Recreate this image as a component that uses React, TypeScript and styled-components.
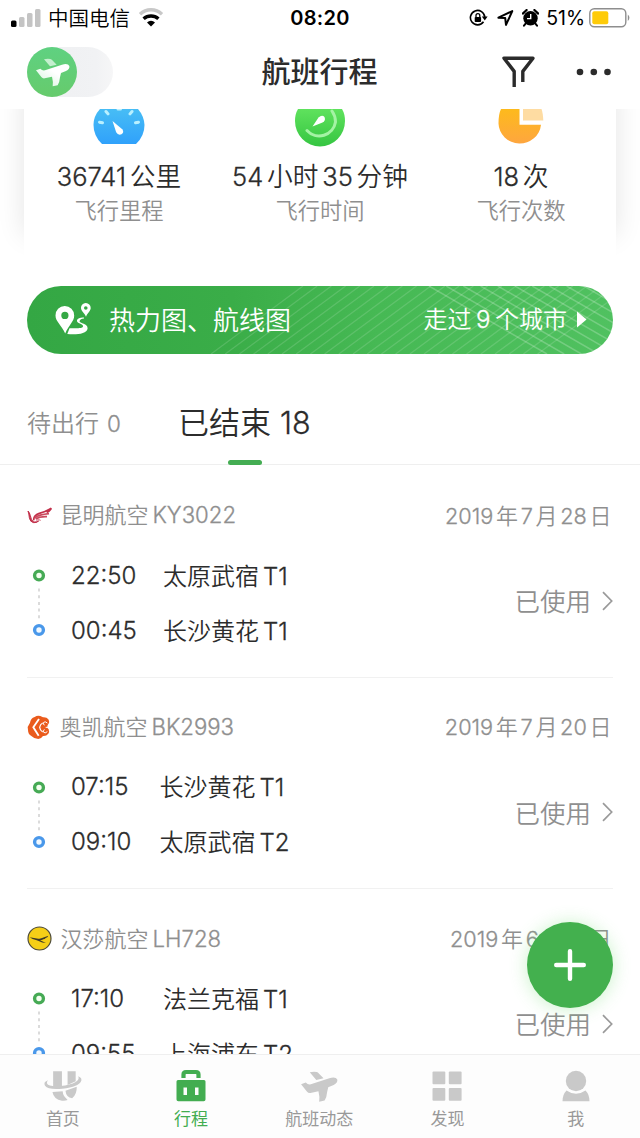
import React from 'react';
import styled, { createGlobalStyle } from 'styled-components';

const GlobalStyle = createGlobalStyle`
  * { box-sizing: border-box; }
  body { margin: 0; background: #fff; }
  svg { display: block; flex: none; }
`;

const Screen = styled.div`
  width: 640px;
  height: 1138px;
  display: flex;
  flex-direction: column;
  overflow: hidden;
  position: relative;
  background: #fff;
  color: #2c2c2c;
  font-family: Inter, 'Noto Sans CJK SC', sans-serif;
  font-weight: 300;
`;

/* ---------- text with separately spaced latin runs ---------- */

const TextLine = styled.span<{ $size: number; $color?: string; $weight?: number; $ls?: number }>`
  display: flex;
  align-items: baseline;
  white-space: nowrap;
  line-height: 1.3;
  padding-bottom: 0.06em;
  font-family: 'Noto Sans CJK SC', sans-serif;
  font-size: ${p => p.$size}px;
  font-weight: ${p => p.$weight ?? 350};
  letter-spacing: ${p => p.$ls ?? 0}px;
  color: ${p => p.$color ?? 'inherit'};
`;

const Latin = styled.span<{ $size?: number; $gap: number; $ls: number; $first: boolean; $last: boolean }>`
  font-family: Inter, sans-serif;
  font-weight: 300;
  -webkit-text-stroke: 0.3px currentColor;
  font-size: ${p => (p.$size ? `${p.$size}px` : 'inherit')};
  letter-spacing: ${p => p.$ls}px;
  margin-left: ${p => (p.$first ? 0 : p.$gap)}px;
  margin-right: ${p => (p.$last ? 0 : p.$gap)}px;
`;

interface MixedProps {
  text: string;
  size: number;
  latinSize?: number;
  gap?: number;
  ls?: number;
  latinLs?: number;
  color?: string;
  weight?: number;
}

function Mixed({ text, size, latinSize, gap = 4, ls = 0, latinLs = 0, color, weight }: MixedProps) {
  const runs = text.match(/[\x21-\x7e]+|[^\x00-\x7f]+/g) ?? [];
  return (
    <TextLine $size={size} $color={color} $weight={weight} $ls={ls}>
      {runs.map((run, i) =>
        run.charCodeAt(0) < 128 ? (
          <Latin key={i} $size={latinSize} $gap={gap} $ls={latinLs} $first={i === 0} $last={i === runs.length - 1}>
            {run}
          </Latin>
        ) : (
          <span key={i}>{run}</span>
        ),
      )}
    </TextLine>
  );
}

/* ---------- status bar ---------- */

const StatusBar = styled.div`
  height: 36px;
  flex: none;
  display: grid;
  grid-template-columns: 1fr auto 1fr;
  align-items: center;
  padding: 0 9px 0 11px;
  color: #000;
`;

const StatusSide = styled.div<{ $end?: boolean }>`
  display: flex;
  align-items: center;
  justify-content: ${p => (p.$end ? 'flex-end' : 'flex-start')};
`;

const Clock = styled.div`
  font-size: 20px;
  font-weight: 600;
  letter-spacing: 0.3px;
  margin-right: 2px;
`;

const Percent = styled.div`
  font-size: 19.5px;
  font-weight: 400;
  letter-spacing: -0.1px;
  margin: 0 4px 0 7px;
`;

const Carrier = styled.div`
  margin: 0 8px 0 7px;
`;

const Spacer = styled.div<{ $w: number }>`
  flex: none;
  width: ${p => p.$w}px;
`;

const SignalIcon = () => (
  <svg width="30" height="20" viewBox="0 0 30 20">
    <rect x="0" y="12.5" width="5.5" height="6.5" rx="1.5" fill="#000" />
    <rect x="8" y="9" width="5.5" height="10" rx="1.5" fill="#c4c4c4" />
    <rect x="16" y="5" width="5.5" height="14" rx="1.5" fill="#c4c4c4" />
    <rect x="24" y="1" width="5.5" height="18" rx="1.5" fill="#c4c4c4" />
  </svg>
);

const WifiIcon = () => (
  <svg width="26" height="20" viewBox="0 0 26 20">
    <path d="M2 6.200a16 16 0 0 1 22 0" fill="none" stroke="#c8c8c8" strokeWidth="3.400" />
    <path d="M5.6 10.800a11 11 0 0 1 14.8 0" fill="none" stroke="#000" strokeWidth="3.400" />
    <path d="M13 18.400 9 14.400a5.900 5.900 0 0 1 8 0z" fill="#000" />
  </svg>
);

const LockRotateIcon = () => (
  <svg width="19" height="18" viewBox="0 0 19 18">
    <path d="M14.5 12.8a7.2 7.2 0 1 1 1.3-4.6" fill="none" stroke="#000" strokeWidth="1.6" />
    <path d="M12.8 7.6h5.8l-2.8 3.8z" fill="#000" />
    <rect x="5.7" y="8" width="6.4" height="5" rx="0.8" fill="#000" />
    <path d="M7 8V6.6a1.9 1.9 0 0 1 3.8 0V8" fill="none" stroke="#000" strokeWidth="1.3" />
  </svg>
);

const LocationIcon = () => (
  <svg width="17" height="17" viewBox="0 0 17 17">
    <path d="M1.400 7.700 15.3 1.100 9 14.900 8.2 8.100z" fill="none" stroke="#000" strokeWidth="2" strokeLinejoin="round" />
  </svg>
);

const AlarmIcon = () => (
  <svg width="17" height="18" viewBox="0 0 17 18">
    <circle cx="8.5" cy="9.3" r="7.2" fill="#000" />
    <path d="M0.8 4.6 4.6 1M16.2 4.6 12.4 1" stroke="#000" strokeWidth="2.2" strokeLinecap="round" />
    <path d="M3.6 14.6 2 16.6M13.4 14.6l1.6 2" stroke="#000" strokeWidth="2" strokeLinecap="round" />
    <path d="M8.7 5v4.6H5" fill="none" stroke="#fff" strokeWidth="1.4" />
  </svg>
);

const BatteryIcon = () => (
  <svg width="42" height="20" viewBox="0 0 42 20">
    <rect x="0.8" y="0.8" width="36" height="18" rx="4.5" fill="#fff" stroke="#8e8e8e" strokeWidth="1.4" />
    <rect x="3.3" y="3.3" width="16" height="13" rx="2" fill="#fecb09" />
    <path d="M38.8 6.6a4 4 0 0 1 0 6.4z" fill="#8e8e8e" />
  </svg>
);

/* ---------- header ---------- */

const Header = styled.div`
  height: 73px;
  flex: none;
  display: grid;
  grid-template-columns: 1fr auto 1fr;
  align-items: center;
  padding: 0 28px 1px 27px;
`;

const Toggle = styled.div`
  width: 86px;
  height: 50px;
  border-radius: 25px;
  background: linear-gradient(90deg, #f0f1f3 50%, #f1f2f4 80%, #f6f6f7);
`;

const HeaderActions = styled.div`
  display: flex;
  justify-content: flex-end;
  align-items: center;
  gap: 41px;
`;

const PLANE_WING = 'M132 178q10-3 19-1 4 1 6 4l13 13-20 5z';
const PLANE_BODY =
  'M108 211l13-5q6 7 14 5l51-17q18-5 22 4 2 9-10 15l-15 6-3 13q-1 14-7 24l-15 3q2-14-2-29l-22 5q-6 1-10-4z';

const ToggleKnob = () => (
  <svg width="50" height="50" viewBox="81 141 150 150">
    <defs>
      <linearGradient id="knob" x1="0" y1="0" x2="0" y2="1">
        <stop offset="0" stopColor="#5fd181" />
        <stop offset="1" stopColor="#66cb6c" />
      </linearGradient>
      <linearGradient id="knobPlane" x1="0" y1="1" x2="1" y2="0">
        <stop offset="0" stopColor="#d3f3da" />
        <stop offset="0.6" stopColor="#fff" />
      </linearGradient>
    </defs>
    <circle cx="156" cy="216" r="75" fill="url(#knob)" />
    <path d={PLANE_WING} fill="#c5efcf" />
    <path d={PLANE_BODY} fill="url(#knobPlane)" />
  </svg>
);

const FilterIcon = () => (
  <svg width="33" height="32" viewBox="0 0 33 32">
    <path d="M12.2 31V15.4L2 2.2h29L20.8 15.4V26" fill="none" stroke="#2b2b2b" strokeWidth="3.4" strokeLinejoin="round" />
  </svg>
);

const DotsIcon = () => (
  <svg width="36" height="8" viewBox="0 0 36 8">
    <circle cx="4" cy="4" r="3.3" fill="#2b2b2b" />
    <circle cx="17.8" cy="4" r="3.3" fill="#2b2b2b" />
    <circle cx="31.5" cy="4" r="3.3" fill="#2b2b2b" />
  </svg>
);

/* ---------- statistics ---------- */

const Content = styled.div`
  flex: 1;
  min-height: 0;
  overflow: hidden;
`;

const StatsClip = styled.div`
  height: 176.5px;
  overflow: hidden;
  padding: 0 24px;
`;

const StatsCard = styled.div`
  height: 150px;
  display: grid;
  grid-template-columns: 190px 1fr 190px;
  background: #fff;
  box-shadow: 0 -24px 26px rgba(0, 0, 0, 0.11);
`;

const Stat = styled.div`
  display: flex;
  flex-direction: column;
  align-items: center;
`;

const StatIcon = styled.div`
  height: 49px;
`;

const StatValue = styled.div`
  height: 36px;
  display: flex;
  align-items: center;
`;

const StatLabel = styled.div`
  height: 32px;
  display: flex;
  align-items: center;
`;

const GaugeIcon = () => (
  <svg width="52" height="38" viewBox="0 0 52 38">
    <defs>
      <linearGradient id="gauge" x1="0" y1="0" x2="0" y2="1">
        <stop offset="0" stopColor="#47bdf5" />
        <stop offset="1" stopColor="#30a1fb" />
      </linearGradient>
    </defs>
    <path d="M7 0h38q6 7 6.500 16 0 11-8.500 19H9Q.5 27 .5 16 .5 7 7 0z" fill="url(#gauge)" />
    <g stroke="#b9f0ff" strokeWidth="3" strokeLinecap="round">
      <path d="M6.500 13.200l3 .6M45.500 13.200l-3 .6M13 2.500l2 2.400M39 2.500l-2 2.400M25 0h2.500" />
    </g>
    <path d="M19.500 12l10 8.500q1.800 3-1 4.800-3.500 1.300-5.300-2z" fill="#fff" />
  </svg>
);

const TimeIcon = () => (
  <svg width="52" height="38" viewBox="0 0 52 38">
    <defs>
      <linearGradient id="time" x1="0" y1="0" x2="0" y2="1">
        <stop offset="0" stopColor="#5fe25d" />
        <stop offset="1" stopColor="#35c541" />
      </linearGradient>
    </defs>
    <path d="M4 0h44q3 5 3 12a25 25.500 0 0 1-50 0Q1 5 4 0z" fill="url(#time)" />
    <path d="M13 21.500a16.500 16.500 0 0 0 28.500-8.500q0-6-3.500-11" fill="none" stroke="#a4f3a4" strokeWidth="3" strokeLinecap="round" />
    <path d="M18.500 17.500l6-9q3.500-3 6-.5 1.500 3.500-2 5.500z" fill="#fff" />
  </svg>
);

const PieIcon = () => (
  <svg width="50" height="38" viewBox="0 0 50 38">
    <defs>
      <linearGradient id="pie" x1="0" y1="0" x2="0" y2="1">
        <stop offset="0" stopColor="#fdba1c" />
        <stop offset="1" stopColor="#fea63f" />
      </linearGradient>
    </defs>
    <path d="M5 0h18.500v15.800h21.500A21.300 20.500 0 0 1 2.500 14.500Q2.500 5 5 0z" fill="url(#pie)" />
    <path d="M27 0h18.500q1.500 4 1.800 11.500H27z" fill="#fedca2" />
  </svg>
);

/* ---------- banner ---------- */

const Banner = styled.div`
  margin: 0 27px;
  height: 68px;
  border-radius: 34px;
  overflow: hidden;
  display: grid;
  color: #fff;
  background: linear-gradient(90deg, #34a744 0%, #3aad48 35%, #46b954 60%, #50c160 100%);
`;

const BannerPattern = styled.svg`
  grid-area: 1 / 1;
`;

const BannerRow = styled.div`
  grid-area: 1 / 1;
  display: flex;
  align-items: center;
  justify-content: space-between;
  padding: 0 26px 0 28px;
  z-index: 1;
`;

const BannerSide = styled.div<{ $gap: number }>`
  display: flex;
  align-items: center;
  gap: ${p => p.$gap}px;
`;

const RouteIcon = () => (
  <svg width="37" height="33" viewBox="0 0 37 33">
    <path fillRule="evenodd" d="M9.700 3a9.400 9.400 0 0 1 9.500 9.500c0 6-5.500 9.500-9 18C6.500 22 .5 18.500.5 12.500A9.300 9.300 0 0 1 9.700 3zm.2 5.800a3.600 3.600 0 1 0 0 7.200 3.600 3.600 0 0 0 0-7.200z" fill="#fff" />
    <path fillRule="evenodd" d="M30.700 0a4.900 4.900 0 0 1 5 5c0 3-3 4.600-4.700 8.800C29.300 9.600 26 8 26 5a4.800 4.800 0 0 1 4.700-5zm.1 3.200a1.800 1.800 0 1 0 0 3.600 1.800 1.800 0 0 0 0-3.600z" fill="#fff" />
    <path d="M29 14.500c-4.500 0-7.500 1.500-7 3.800.5 2.300 6.500 2.700 6 5.200-.6 2.200-7 1.800-13.500 1.700L12.300 31c8 .5 19.700.6 20.300-5.500.4-5-8.100-5-8.100-7.200 0-1.700 2.500-2.500 4.500-2.800z" fill="#fff" />
  </svg>
);

const PlayIcon = () => (
  <svg width="10" height="17" viewBox="0 0 10 17">
    <path d="M0 0.500 9.500 8.500 0 16.500z" fill="#fff" />
  </svg>
);

const risingLines = Array.from({ length: 24 }, (_, i) => 184 + i * 14.2);
const fallingLines = Array.from({ length: 15 }, (_, i) => 402 + i * 17.2);

/* ---------- tabs ---------- */

const Tabs = styled.div`
  height: 111px;
  border-bottom: 1px solid #efefef;
  display: flex;
  padding-left: 27px;
`;

const Tab = styled.div<{ $width: number }>`
  width: ${p => p.$width}px;
  height: 111.5px;
  display: flex;
  flex-direction: column;
  align-items: flex-start;
  justify-content: flex-end;
`;

const TabText = styled.div`
  height: 40px;
  display: flex;
  align-items: center;
  margin-bottom: 17px;
`;

const TabMark = styled.div<{ $on?: boolean }>`
  width: 34px;
  height: 5px;
  margin-left: 50px;
  border-radius: 3px;
  background: ${p => (p.$on ? '#44ad53' : 'transparent')};
`;

/* ---------- flights ---------- */

const Flight = styled.div`
  margin: 0 27px;
  height: 211.600px;
  padding-top: 32.500px;
  border-bottom: 1px solid #f1f1f1;
`;

const FirstGap = styled.div`
  height: 1.500px;
`;

const FlightHead = styled.div`
  height: 34px;
  display: flex;
  align-items: center;
  justify-content: space-between;
  padding-right: 1.500px;
`;

const Airline = styled.div`
  display: flex;
  align-items: center;
  gap: 8.500px;
`;

const FlightBody = styled.div`
  height: 110px;
  margin-top: 15.500px;
  display: flex;
  align-items: center;
`;

const Legs = styled.div`
  flex: 1;
  display: flex;
  flex-direction: column;
`;

const Leg = styled.div<{ $timeWidth: number }>`
  height: 54.700px;
  display: grid;
  grid-template-columns: ${p => p.$timeWidth}px auto;
  justify-content: start;
  align-items: center;
  padding-top: 1px;
`;

const Track = styled.div`
  width: 44px;
  padding-left: 5px;
`;

const Used = styled.div`
  display: flex;
  align-items: center;
  gap: 11px;
  padding-bottom: 5px;
`;

const TrackIcon = () => (
  <svg width="14" height="70" viewBox="0 0 14 70">
    <circle cx="7" cy="7.500" r="4.400" fill="#f4fff0" stroke="#46aa55" strokeWidth="3.400" />
    <path d="M7 20.500v30" stroke="#cfcfcf" strokeWidth="1.500" strokeDasharray="3 3.700" />
    <circle cx="7" cy="62" r="4.400" fill="#f2f9ff" stroke="#4a98ea" strokeWidth="3.400" />
  </svg>
);

const ChevronIcon = () => (
  <svg width="11" height="20" viewBox="0 0 11 20">
    <path d="M1 1.200 9.700 10 1 18.800" fill="none" stroke="#9a9a9a" strokeWidth="1.700" />
  </svg>
);

const KunmingLogo = () => (
  <svg width="25" height="24" viewBox="80 40 75 72">
    <path d="M83 64q5 5 7 14 2 14 10 19 8 1 15-3-6 6-15 5-11-2-13-15-1-12-4-20z" fill="#c2304a" stroke="#c2304a" strokeWidth="3" />
    <path d="M100 92q-1-15 17-21 20-5 36-15-5 9-14 12" fill="none" stroke="#c2304a" strokeWidth="5.500" />
    <path d="M103 84q12-9 43-12M106 88q12-8 34-7" fill="none" stroke="#cb4a5e" strokeWidth="5" />
    <path d="M108 92q7-4 13 0" fill="none" stroke="#cf5a6c" strokeWidth="3" />
  </svg>
);

const OkayLogo = () => (
  <svg width="24" height="26" viewBox="80 40 72 78">
    <path d="M82 79l7-13q2-13 14-17 8-6 17-3l8 4q11-1 16 6 5 9 0 14-3 4-3 8 0 5 4 8 3 8-1 13-6 8-16 7-5 8-14 9-13-1-22-10-9-5-9-17z" fill="#ea5b1c" />
    <path d="M116 55 99 80l16 25" fill="none" stroke="#fff" strokeWidth="5.500" />
    <path d="M127 67q-8 4-9 13 1 9 9 14" fill="none" stroke="#fff" strokeWidth="3.500" />
    <path d="M141 67q-7-7-12-1-2 6 4 7M141 93q-7 7-12 1-2-6 4-7M136 80h16" fill="none" stroke="#fff" strokeWidth="3" />
  </svg>
);

const LufthansaLogo = () => (
  <svg width="25" height="25" viewBox="80 677 75 75">
    <circle cx="117.500" cy="714.500" r="34.500" fill="#f5cf17" stroke="#4c4a3a" strokeWidth="3.500" />
    <path d="M88 711l26 4q5 1 9-1l21-8q-2 5-8 7l-3 3-4 1q-4 3-10 3l18 8q-12 0-22-6l-8-3q-11-2-19-8z" fill="#3d3a2a" />
  </svg>
);

/* ---------- bottom navigation ---------- */

const NavBar = styled.div`
  height: 84.500px;
  flex: none;
  display: grid;
  grid-template-columns: repeat(5, 128.200px);
  justify-content: center;
  padding-right: 1.500px;
  border-top: 1px solid #efefef;
  background: #fdfdfd;
`;

const NavItem = styled.div`
  display: flex;
  flex-direction: column;
  align-items: center;
  padding-top: 14px;
`;

const NavLabel = styled.div`
  height: 26px;
  margin-top: 1px;
  display: flex;
  align-items: center;
`;

const HomeIcon = () => (
  <svg width="38" height="36" viewBox="135 326 108 108" preserveAspectRatio="none">
    <path d="M161 333h25v44l-25 5zM202 333h23v30l-23 11z" fill="#c9c9c9" />
    <path d="M159 395l29-2q1 11 4 14l10 12q-7 3-16 2-23-3-27-26zM196 391l32-12q1 22-13 35-17-3-19-23z" fill="#c9c9c9" />
    <path d="M147 360q-15 5-9 16 9 13 49 9 48-6 54-24 2-9-9-13 5 10-7 17-16 9-43 12-35 2-38-7-2-6 3-10z" fill="#c9c9c9" />
  </svg>
);

const BagIcon = () => (
  <svg width="30" height="36" viewBox="0 0 30 36">
    <path d="M7.500 9V5.500q0-2.500 2.500-2.500h10q2.500 0 2.500 2.500V9" fill="none" stroke="#43ad51" strokeWidth="4.200" />
    <path fillRule="evenodd" d="M2 11h26q1.500 0 1.500 1.500v18q0 1.800-1.800 1.800H2.300Q.5 32.300.5 30.500v-18Q.5 11 2 11zm5.500 7.500V26H11v-7.500zm11.500 0V26h3.500v-7.500z" fill="#43ad51" />
  </svg>
);

const NavPlaneIcon = () => (
  <svg width="38" height="36" viewBox="105 169 105 99">
    <path d={PLANE_WING} fill="#c9c9c9" />
    <path d={PLANE_BODY} fill="#c9c9c9" />
  </svg>
);

const GridIcon = () => (
  <svg width="30" height="36" viewBox="0 0 30 36">
    {[0.5, 16.8].map(x =>
      [2.5, 19].map(y => <rect key={`${x}-${y}`} x={x} y={y} width="12.800" height="12.800" rx="1" fill="#c9c9c9" />),
    )}
  </svg>
);

const UserIcon = () => (
  <svg width="28" height="36" viewBox="0 0 28 36">
    <circle cx="14" cy="12" r="10.200" fill="#c9c9c9" />
    <path d="M4.500 21.500q9.500 6.500 19 0 4 4 4 10.800H.5q0-6.800 4-10.800z" fill="#c9c9c9" />
  </svg>
);

const AddButton = styled.button`
  position: absolute;
  left: 527px;
  top: 921.500px;
  width: 86px;
  height: 86px;
  padding: 0;
  border: 0;
  border-radius: 50%;
  display: grid;
  place-items: center;
  background: #43b04e;
  box-shadow: 0 1px 18px rgba(90, 215, 90, 0.32);
`;

const PlusIcon = () => (
  <svg width="32" height="32" viewBox="0 0 32 32">
    <path d="M16 2.200v27.600M2.200 16h27.600" stroke="#fff" strokeWidth="4.400" strokeLinecap="round" />
  </svg>
);

/* ---------- data ---------- */

const GREY = '#8f8f8f';

const stats = [
  { icon: <GaugeIcon />, value: '36741公里', label: '飞行里程' },
  { icon: <TimeIcon />, value: '54小时35分钟', label: '飞行时间' },
  { icon: <PieIcon />, value: '18次', label: '飞行次数' },
];

const flights = [
  {
    logo: <KunmingLogo />, name: '昆明航空KY3022', date: '2019年7月28日', timeWidth: 92,
    legs: [['22:50', '太原武宿T1'], ['00:45', '长沙黄花T1']],
  },
  {
    logo: <OkayLogo />, name: '奥凯航空BK2993', date: '2019年7月20日', timeWidth: 88.5,
    legs: [['07:15', '长沙黄花T1'], ['09:10', '太原武宿T2']],
  },
  {
    logo: <LufthansaLogo />, name: '汉莎航空LH728', date: '2019年6月17日', timeWidth: 92,
    legs: [['17:10', '法兰克福T1'], ['09:55', '上海浦东T2']],
  },
];

const navItems = [
  { icon: <HomeIcon />, label: '首页' },
  { icon: <BagIcon />, label: '行程', active: true },
  { icon: <NavPlaneIcon />, label: '航班动态' },
  { icon: <GridIcon />, label: '发现' },
  { icon: <UserIcon />, label: '我' },
];

export default function App() {
  return (
    <Screen>
      <GlobalStyle />
      <StatusBar>
        <StatusSide>
          <SignalIcon />
          <Carrier><Mixed text="中国电信" size={20.5} /></Carrier>
          <WifiIcon />
        </StatusSide>
        <Clock>08:20</Clock>
        <StatusSide $end>
          <LockRotateIcon />
          <Spacer $w={9} />
          <LocationIcon />
          <Spacer $w={8} />
          <AlarmIcon />
          <Percent>51%</Percent>
          <BatteryIcon />
        </StatusSide>
      </StatusBar>
      <Header>
        <Toggle><ToggleKnob /></Toggle>
        <Mixed text="航班行程" size={29} weight={500} />
        <HeaderActions>
          <FilterIcon />
          <DotsIcon />
        </HeaderActions>
      </Header>
      <Content>
        <StatsClip>
          <StatsCard>
            {stats.map(s => (
              <Stat key={s.label}>
                <StatIcon>{s.icon}</StatIcon>
                <StatValue><Mixed text={s.value} size={25.7} latinSize={25.5} gap={3.8} /></StatValue>
                <StatLabel><Mixed text={s.label} size={22.3} color={GREY} /></StatLabel>
              </Stat>
            ))}
          </StatsCard>
        </StatsClip>
        <Banner>
          <BannerPattern width="586" height="68" viewBox="0 0 586 68">
            <g stroke="#fff" strokeOpacity="0.14" strokeWidth="1.300">
              {risingLines.map(x => <path key={x} d={`M${x} 68l92-68`} />)}
            </g>
            <g stroke="#fff" strokeOpacity="0.22" strokeWidth="1.500">
              {fallingLines.map(x => <path key={x} d={`M${x} 0l118 68`} />)}
            </g>
          </BannerPattern>
          <BannerRow>
            <BannerSide $gap={17}>
              <RouteIcon />
              <Mixed text="热力图、航线图" size={26} />
            </BannerSide>
            <BannerSide $gap={10}>
              <Mixed text="走过9个城市" size={24} gap={4.5} />
              <PlayIcon />
            </BannerSide>
          </BannerRow>
        </Banner>
        <Tabs>
          <Tab $width={151}>
            <TabText><Mixed text="待出行 0" size={24} latinSize={22.5} gap={8} color={GREY} /></TabText>
            <TabMark />
          </Tab>
          <Tab $width={140}>
            <TabText><Mixed text="已结束 18" size={31} latinSize={30.5} gap={9} /></TabText>
            <TabMark $on />
          </Tab>
        </Tabs>
        <FirstGap />
        {flights.map(f => (
          <Flight key={f.name}>
            <FlightHead>
              <Airline>
                {f.logo}
                <Mixed text={f.name} size={22} latinSize={22.2} color={GREY} />
              </Airline>
              <Mixed text={f.date} size={22} latinSize={21.7} gap={2.7} color={GREY} />
            </FlightHead>
            <FlightBody>
              <Track><TrackIcon /></Track>
              <Legs>
                {f.legs.map(([time, place]) => (
                  <Leg key={time} $timeWidth={f.timeWidth}>
                    <Mixed text={time} size={24} />
                    <Mixed text={place} size={24} />
                  </Leg>
                ))}
              </Legs>
              <Used>
                <Mixed text="已使用" size={25.5} color={GREY} />
                <ChevronIcon />
              </Used>
            </FlightBody>
          </Flight>
        ))}
      </Content>
      <NavBar>
        {navItems.map(n => (
          <NavItem key={n.label}>
            {n.icon}
            <NavLabel>
              <Mixed text={n.label} size={17} weight={400} color={n.active ? '#43ad51' : '#999'} />
            </NavLabel>
          </NavItem>
        ))}
      </NavBar>
      <AddButton aria-label="添加行程"><PlusIcon /></AddButton>
    </Screen>
  );
}
